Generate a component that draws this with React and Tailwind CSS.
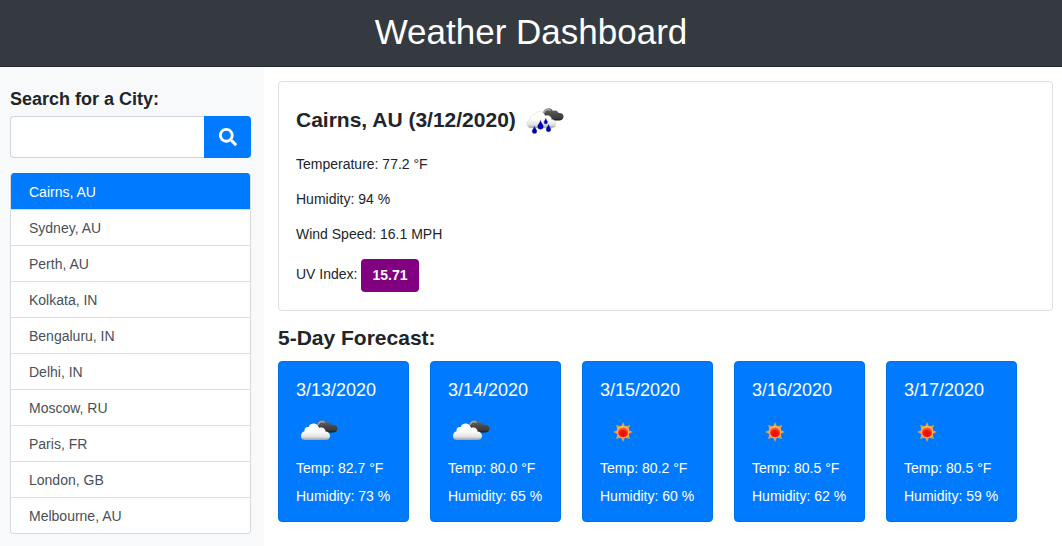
import React from "react";

const cities = [
  "Cairns, AU",
  "Sydney, AU",
  "Perth, AU",
  "Kolkata, IN",
  "Bengaluru, IN",
  "Delhi, IN",
  "Moscow, RU",
  "Paris, FR",
  "London, GB",
  "Melbourne, AU",
];

const forecast = [
  { date: "3/13/2020", icon: "clouds", temp: "82.7", humidity: 73 },
  { date: "3/14/2020", icon: "clouds", temp: "80.0", humidity: 65 },
  { date: "3/15/2020", icon: "sun", temp: "80.2", humidity: 60 },
  { date: "3/16/2020", icon: "sun", temp: "80.5", humidity: 62 },
  { date: "3/17/2020", icon: "sun", temp: "80.5", humidity: 59 },
];

const DARK_CLOUD =
  "M17 8C17 4.500 19.500 2.500 22 2.500C24 2 26 3 27 5C29.500 4 32 5 32.500 7C35.500 6.500 37.500 8 37.500 10.500C37.500 13 35.500 14.500 33 14.500H24Z";
const WHITE_CLOUD =
  "M5 22C2.500 22 1 20.500 1 18C1 15.500 2.500 13.500 4.500 13.500C4 10 6 8.500 8.500 9C9.500 6.500 11.500 5.500 13.500 5.500C16.500 5.500 18.500 7.500 19 10C22.500 8.500 25.500 10.500 25.500 13.500C28 13.500 30 15.500 30 18C30 20.500 28 22 25.500 22Z";

function Clouds({ rain = false, id }) {
  return (
    <svg width="38" height="28" viewBox="0 0 38 28" aria-hidden="true">
      <defs>
        <linearGradient id={`${id}-white`} x1="0" y1="0" x2="0" y2="1">
          <stop offset="0.45" stopColor="#ffffff" />
          <stop offset="0.8" stopColor="#e2e2e2" />
          <stop offset="1" stopColor="#a0a0a0" />
        </linearGradient>
        <linearGradient id={`${id}-dark`} x1="0" y1="0" x2="0" y2="1">
          <stop offset="0" stopColor="#6c6c6c" />
          <stop offset="0.5" stopColor="#484848" />
          <stop offset="0.8" stopColor="#3c3c3c" />
          <stop offset="1" stopColor="#181818" />
        </linearGradient>
      </defs>
      <path d={DARK_CLOUD} fill={`url(#${id}-dark)`} />
      <path d="M18 7C18.500 3.500 22 2.500 24.500 4.500" fill="none" stroke="#a8a8a8" strokeWidth="1.500" />
      <path
        d={WHITE_CLOUD}
        fill={`url(#${id}-white)`}
        stroke={rain ? "#d4d4d4" : "none"}
        strokeWidth="0.500"
      />
      {rain && (
        <g fill="#0000b8" stroke="#14147c" strokeWidth="0.400">
          <path d="M8.500 20.500C9 22.500 10.800 23.500 10.800 25.200A2.300 2.300 0 0 1 6.200 25.200C6.200 23.500 8 22.500 8.500 20.500Z" />
          <path d="M14.500 14.500C15 17 17.300 18.500 17.300 20.500A2.800 2.800 0 0 1 11.700 20.500C11.700 18.500 14 17 14.500 14.500Z" />
          <path d="M19.800 12.500C20.200 14 21.500 15 21.500 16.300A1.700 1.700 0 0 1 18.100 16.300C18.100 15 19.400 14 19.800 12.500Z" />
          <path d="M22.500 18.500C23 20.500 24.800 22 24.800 23.500A2.300 2.300 0 0 1 20.200 23.500C20.200 22 22 20.500 22.500 18.500Z" />
        </g>
      )}
    </svg>
  );
}

function Sun({ id }) {
  return (
    <svg width="20" height="20" viewBox="0 0 20 20" aria-hidden="true">
      <defs>
        <radialGradient id={id} cx="0.5" cy="0.65" r="0.7">
          <stop offset="0" stopColor="#f00000" />
          <stop offset="0.45" stopColor="#f81c0c" />
          <stop offset="0.75" stopColor="#ff8040" />
          <stop offset="1" stopColor="#ffe8a8" />
        </radialGradient>
      </defs>
      <path
        d="M10 0L12 4.500L17 3L15.500 8L20 10L15.500 12L17 17L12 15.500L10 20L8 15.500L3 17L4.500 12L0 10L4.500 8L3 3L8 4.500Z"
        fill="#e39b4a"
      />
      <circle cx="10" cy="10" r="5.800" fill={`url(#${id})`} stroke="#ffc85c" strokeWidth="0.800" />
    </svg>
  );
}

function SearchIcon() {
  return (
    <svg width="18" height="18" viewBox="0 0 512 512" fill="currentColor" aria-hidden="true">
      <path d="M505 442.700 405.300 343c-4.500-4.500-10.600-7-17-7H372c27.600-35.300 44-79.700 44-128C416 93.100 322.900 0 208 0S0 93.100 0 208s93.100 208 208 208c48.300 0 92.700-16.400 128-44v16.300c0 6.400 2.500 12.500 7 17l99.700 99.700c9.400 9.400 24.600 9.400 33.900 0l28.300-28.300c9.400-9.400 9.400-24.600.1-34zM208 336c-70.700 0-128-57.200-128-128 0-70.700 57.200-128 128-128 70.700 0 128 57.200 128 128 0 70.700-57.200 128-128 128z" />
    </svg>
  );
}

function Sidebar() {
  return (
    <aside className="w-66 shrink-0 bg-[#f8f9fa] pt-5 pr-[13px] pb-3 pl-[10px]">
      <form onSubmit={(e) => e.preventDefault()}>
        <label htmlFor="city" className="block h-[29px] text-lg leading-6 font-bold">
          Search for a City:
        </label>
        <div className="flex h-[42px]">
          <input
            id="city"
            type="text"
            className="min-w-0 flex-1 rounded-l border border-r-0 border-[#ced4da] bg-white px-4 outline-none"
          />
          <button
            type="submit"
            aria-label="Search"
            className="flex w-[47px] items-center justify-center rounded-r bg-[#007bff] text-white"
          >
            <SearchIcon />
          </button>
        </div>
      </form>
      <ul className="mt-[15px] overflow-hidden rounded border border-t-0 border-[#d8dbde] bg-white">
        {cities.map((city, i) => (
          <li key={city} className="border-b border-[#dfdfdf] last:border-b-0">
            <button
              type="button"
              className={
                i === 0
                  ? "block h-9 w-full bg-[#007bff] px-[18px] pt-px text-left text-white"
                  : "block h-[35px] w-full px-[18px] text-left text-[#495057]"
              }
            >
              {city}
            </button>
          </li>
        ))}
      </ul>
    </aside>
  );
}

function CurrentWeather() {
  return (
    <section className="rounded border border-[#dfdfdf] px-[17px] pt-[17px] pb-[18px]">
      <div className="flex h-[45px] items-center gap-[10px] pb-1">
        <h2 className="text-[21px] leading-7 font-bold">Cairns, AU (3/12/2020)</h2>
        <Clouds rain id="current" />
      </div>
      <div className="mt-[10px] flex flex-col gap-[14px] leading-[21px]">
        <p>Temperature: 77.2 °F</p>
        <p>Humidity: 94 %</p>
        <p>Wind Speed: 16.1 MPH</p>
        <p className="flex gap-1">
          <span className="pt-[5px]">UV Index:</span>
          <span className="rounded bg-[#800080] px-[11px] py-[6px] font-bold text-white">15.71</span>
        </p>
      </div>
    </section>
  );
}

function ForecastCard({ day, id }) {
  return (
    <article className="w-[131px] rounded border border-[#006fe6] bg-[#007bff] px-[17px] pt-4 pb-[14px] text-white">
      <h3 className="text-lg leading-6">{day.date}</h3>
      <div className="flex h-14 w-[45px] items-center justify-center pt-1">
        {day.icon === "sun" ? <Sun id={id} /> : <Clouds id={id} />}
      </div>
      <p className="leading-[21px] whitespace-nowrap">Temp: {day.temp} °F</p>
      <p className="mt-[7px] leading-[21px] whitespace-nowrap">Humidity: {day.humidity} %</p>
    </article>
  );
}

export default function App() {
  return (
    <div
      className="flex min-h-screen flex-col bg-white text-sm text-[#212529]"
      style={{ fontFamily: '"Liberation Sans", Arial, sans-serif' }}
    >
      <header className="border-b border-[#24282c] bg-[#343a40] pt-3 pb-[14px] text-center text-white">
        <h1 className="text-[35px] leading-10">Weather Dashboard</h1>
      </header>
      <div className="flex flex-1">
        <Sidebar />
        <main className="min-w-0 flex-1 pt-[14px] pr-[9px] pl-[14px]">
          <CurrentWeather />
          <h2 className="mt-[13px] mb-[9px] text-[21px] leading-7 font-bold">5-Day Forecast:</h2>
          <div className="flex flex-wrap gap-[21px]">
            {forecast.map((day, i) => (
              <ForecastCard key={day.date} day={day} id={`day${i}`} />
            ))}
          </div>
        </main>
      </div>
    </div>
  );
}
